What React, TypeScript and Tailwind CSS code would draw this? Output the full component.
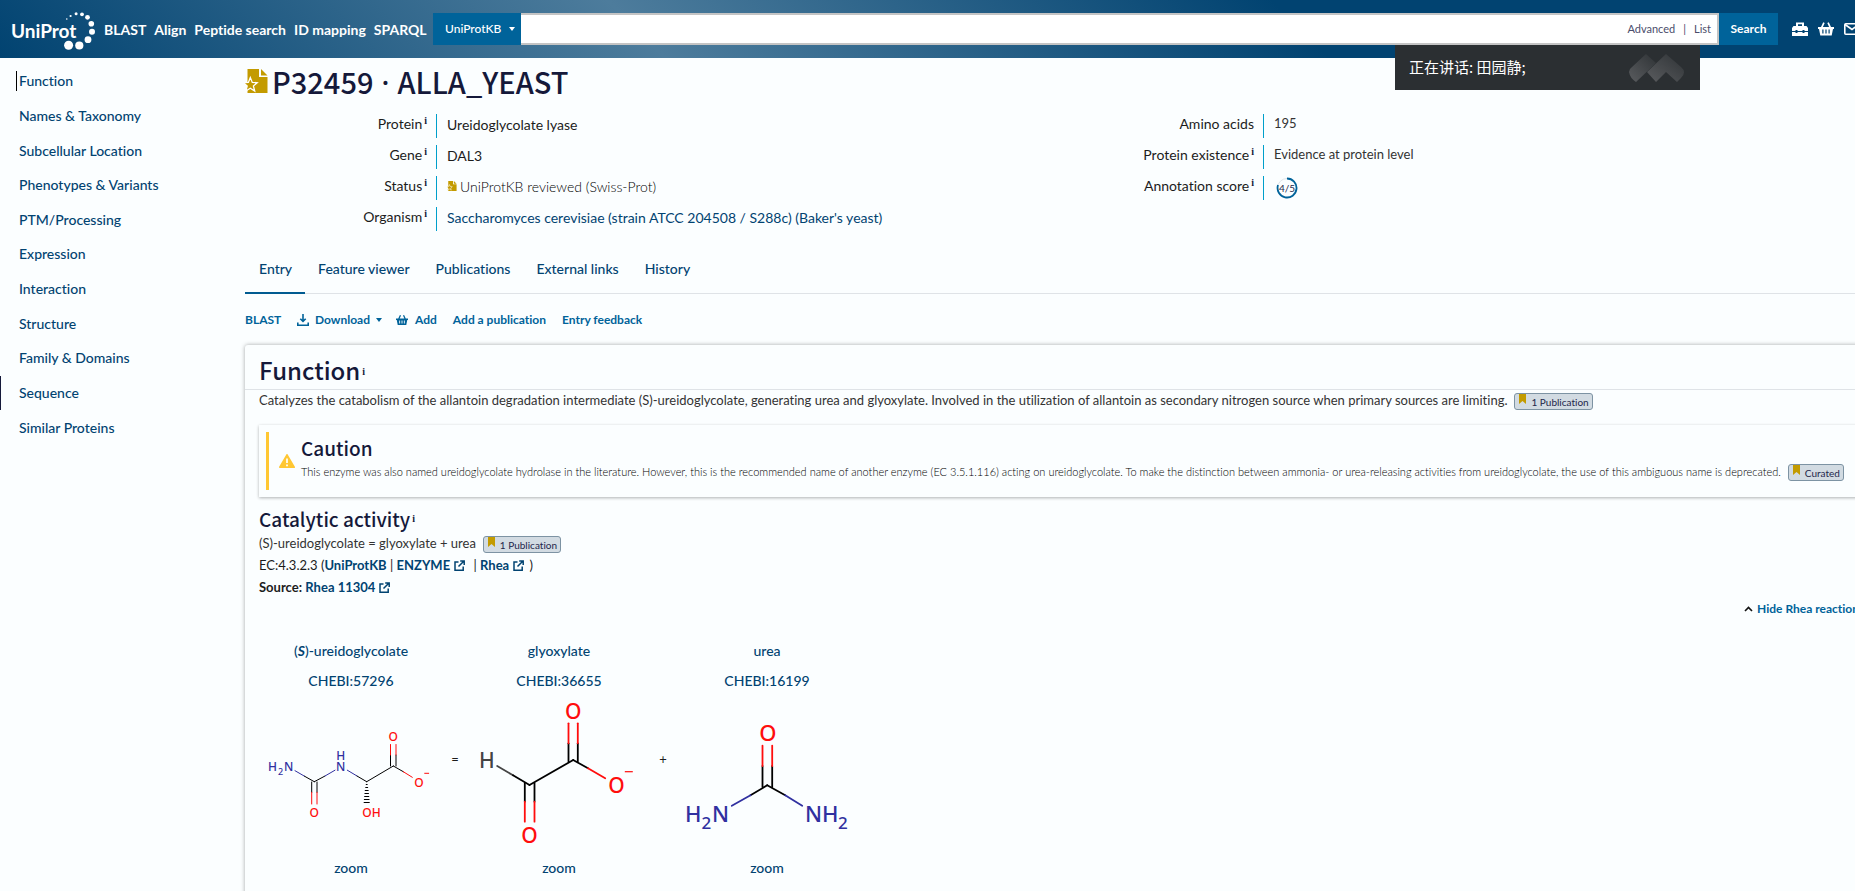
import type { ReactNode } from 'react';

const heading = "font-['Noto_Sans_CJK_SC',sans-serif] font-medium text-[#15193a]";

function Info() {
  return <sup className="relative -top-[5px] align-baseline font-['Liberation_Serif',serif] ml-[2px] text-[10px] leading-none font-bold text-[#15193a]">i</sup>;
}

function Logo() {
  const dots = [
    [66.8, 14, 0.8], [70.6, 11, 1.1], [76.1, 8.7, 1.5], [82, 9.3, 1.9], [87.5, 12.3, 2.4],
    [91.3, 18.7, 2.8], [92, 26.7, 3], [88, 34.7, 3.4], [79.3, 40.5, 4.1], [68.6, 40.3, 4.5],
  ];
  return (
    <svg width="96" height="48" viewBox="0 0 96 48" fill="#fff" role="img" aria-label="UniProt">
      <text x="11" y="33" fontFamily="Lato" fontWeight="700" fontSize="19">UniProt</text>
      {dots.map(([x, y, r]) => <circle key={x} cx={x} cy={y} r={r} />)}
    </svg>
  );
}

function Toolbox() {
  return (
    <svg width="16" height="14" viewBox="0 0 16 14" fill="#fff" aria-hidden="true">
      <path d="M4 4V0.500h8V4h2.500L16 6v3h-3.500V8h-2v1h-5V8h-2v1H0V6l1.500-2H4zM6 4h4V2.200H6zM0 10h3.500v1h2v-1h5v1h2v-1H16v4H0z" />
    </svg>
  );
}

function Basket({ size = 16 }: { size?: number }) {
  return (
    <svg width={size} height={size} viewBox="0 0 16 16" fill="currentColor" aria-hidden="true">
      <path fillRule="evenodd" d="M5.200 1.200 6.700 1.900 4.900 6h6.200L9.300 1.900l1.500-.7L13 6h3v2h-1l-1.300 6.500H2.300L1 8H0V6h3zM4.300 8.500v4h1.200v-4zM7.400 8.500v4h1.200v-4zM10.500 8.500v4h1.200v-4z" />
    </svg>
  );
}

function Mail() {
  return (
    <svg width="16" height="12" viewBox="0 0 16 12" fill="none" stroke="#fff" strokeWidth="1.600" aria-hidden="true">
      <rect x="0.800" y="0.800" width="14.400" height="10.400" rx="1" />
      <path d="m1 1.500 7 5 7-5" />
    </svg>
  );
}

function Reviewed({ width, height }: { width: number; height: number }) {
  return (
    <svg width={width} height={height} viewBox="0 0 22 24" aria-hidden="true">
      <path d="M2 0h11.500v8H22v16H2z" fill="#c39b00" />
      <path d="M15.500 0 22 6.500h-6.500z" fill="#c39b00" />
      <path d="m4.800 8.500 2 4.900 4.900.3-3.800 3.300 1.300 5-4.400-2.700L.4 22l1.300-5L-2 13.700l4.900-.3z" fill="#c39b00" stroke="#fff" strokeWidth="1.300" />
    </svg>
  );
}

function External() {
  return (
    <svg className="ml-[4px] inline-block align-[-1px]" width="11" height="11" viewBox="0 0 11 11" fill="none" stroke="#014371" strokeWidth="1.500" aria-hidden="true">
      <path d="M4.500 2H1v8.200h8.200V6.500M6.200.9H10.200V5M10 1 4.500 6.500" />
    </svg>
  );
}

function Badge({ children }: { children: ReactNode }) {
  return (
    <button className="ml-[7px] inline-flex h-[17px] items-start rounded-[3px] border border-[#7d93a3] bg-[#d2dbe2] pr-[3px] pl-[4px] text-[10px] leading-[17px] font-normal text-[#23264a]">
      <svg className="mr-[5px]" width="7" height="10" viewBox="0 0 7 10" fill="#c39b00" aria-hidden="true"><path d="M0 0h7v10L3.500 7 0 10z" /></svg>
      {children}
    </button>
  );
}

function Caret() {
  return <svg width="6" height="4" viewBox="0 0 6 4" fill="currentColor" aria-hidden="true"><path d="M0 0h6L3 4z" /></svg>;
}

function Row({ label, info = true, children }: { label: string; info?: boolean; children: ReactNode }) {
  return (
    <div className="flex h-6">
      <dt className="w-[191px] shrink-0 pr-[9px] text-right leading-[19px]">{label}{info && <Info />}</dt>
      <dd className="flex items-center border-l border-[#009fcb] pb-[4px] pl-[10px] whitespace-nowrap">{children}</dd>
    </div>
  );
}

const sections = ['Function', 'Names & Taxonomy', 'Subcellular Location', 'Phenotypes & Variants', 'PTM/Processing', 'Expression', 'Interaction', 'Structure', 'Family & Domains', 'Sequence', 'Similar Proteins'];

const RED = '#ff0d0d';
const BLUE = '#3030a0';
const INK = '#000';

type Bond = [number, number, number, number, string];

function Molecule({ bonds, width, children }: { bonds: Bond[]; width: number; children: ReactNode }) {
  return (
    <svg width="180" height="157" viewBox="0 1 180 157" fontFamily="Noto Sans" aria-hidden="true">
      {bonds.map(([x1, y1, x2, y2, c], i) => <line key={i} x1={x1} y1={y1} x2={x2} y2={y2} stroke={c} strokeWidth={width} strokeLinecap="round" />)}
      {children}
    </svg>
  );
}

const ureidoglycolate = (
  <Molecule width={1} bonds={[
    [34, 75.7, 43.5, 81.2, BLUE], [43.5, 81.2, 53.3, 86.7, INK], [53.3, 86.7, 64, 81, INK], [64, 81, 74, 75.2, BLUE],
    [50.7, 87, 50.7, 97.3, INK], [50.7, 97.3, 50.7, 109, RED], [56, 87, 56, 97.3, INK], [56, 97.3, 56, 109, RED],
    [86.3, 75.2, 96, 81, BLUE], [96, 81, 105.700, 86.7, INK], [105.700, 86.7, 132.300, 71, INK],
    [129.500, 71, 129.500, 60, INK], [129.500, 60, 129.500, 49.500, RED], [135, 71, 135, 60, INK], [135, 60, 135, 49.500, RED],
    [132.300, 71, 142.300, 76.7, INK], [142.300, 76.7, 151.300, 82.300, RED],
    [163.700, 78.300, 167.700, 78.300, RED],
    [105.200, 89.500, 106.200, 89.500, INK], [104.700, 92.500, 106.700, 92.500, INK], [104.200, 95.500, 107.200, 95.500, INK],
    [103.900, 98.500, 107.500, 98.500, INK], [103.600, 101.500, 107.800, 101.500, INK], [103.300, 104.500, 108.100, 104.500, INK], [103.100, 107.500, 108.300, 107.500, INK],
  ]}>
    <g fontSize="12" fill={BLUE}>
      <text x="7" y="76">H</text><text x="17" y="80" fontSize="9">2</text><text x="23" y="76">N</text>
      <text x="79.700" y="65" textAnchor="middle">H</text><text x="79.700" y="76" textAnchor="middle">N</text>
    </g>
    <g fontSize="12" fill={RED} textAnchor="middle">
      <text x="53.300" y="122">O</text><text x="110.500" y="122">OH</text><text x="132.300" y="46">O</text><text x="158" y="92">O</text>
    </g>
  </Molecule>
);

const glyoxylate = (
  <Molecule width={1.8} bonds={[
    [28.2, 71, 44, 80.300, '#444'], [44, 80.300, 60.500, 90, INK], [60.500, 90, 104.200, 65, INK],
    [55.8, 88, 55.8, 106.700, INK], [55.8, 106.700, 55.8, 126.700, RED], [65.500, 88, 65.500, 106.700, INK], [65.500, 106.700, 65.500, 126.700, RED],
    [99.500, 66.500, 99.500, 48.300, INK], [99.500, 48.300, 99.500, 28.300, RED], [108.800, 66.500, 108.800, 48.300, INK], [108.800, 48.300, 108.800, 28.300, RED],
    [104.200, 65, 119, 73.300, INK], [119, 73.300, 136.200, 83.300, RED],
  ]}>
    <path d="M155.800 76.700h8" stroke={RED} strokeWidth="1.200" />
    <text x="10" y="73" fontSize="21" fill="#444">H</text>
    <g fontSize="21" fill={RED} textAnchor="middle">
      <text x="60.500" y="148">O</text><text x="104.200" y="23.500">O</text><text x="147.500" y="98">O</text>
    </g>
  </Molecule>
);

const urea = (
  <Molecule width={1.8} bonds={[
    [85.500, 92, 85.500, 71, INK], [85.500, 71, 85.500, 50.700, RED], [95.200, 92, 95.200, 71, INK], [95.200, 71, 95.200, 50.700, RED],
    [90.200, 90.300, 73.500, 100.300, INK], [73.500, 100.300, 54.800, 110.700, BLUE],
    [90.200, 90.300, 108.200, 100.300, INK], [108.200, 100.300, 125.200, 110.700, BLUE],
  ]}>
    <text x="90.800" y="46" fontSize="22" fill={RED} textAnchor="middle">O</text>
    <g fontSize="22" fill={BLUE}>
      <text x="8" y="127">H</text><text x="24.500" y="134" fontSize="17">2</text><text x="35" y="127">N</text>
      <text x="128" y="127">N</text><text x="145" y="127">H</text><text x="161" y="134" fontSize="17">2</text>
    </g>
  </Molecule>
);

function Participant({ name, id, children }: { name: ReactNode; id: string; children: ReactNode }) {
  return (
    <div className="flex w-[180px] flex-col items-center text-[14px] font-medium text-[#014371]">
      <a href="#chebi" className="leading-[30px]">{name}</a>
      <a href="#chebi" className="leading-[30px]">{id}</a>
      {children}
      <a href="#zoom" className="leading-[30px]">zoom</a>
    </div>
  );
}

export default function App() {
  return (
    <div className="h-screen overflow-hidden bg-[#fbfeff] font-['Lato',sans-serif] text-[14px] text-[#1c1c1c] [font-variant-ligatures:none]">
      <div className="w-[calc(100%+44px)]">
        <header className="flex h-[58px] items-center bg-[linear-gradient(45deg,#014371_0%,#4d7c9c_34%,#014371_68%)] pr-[39px] text-white">
          <a href="#home" className="mr-[8px] shrink-0"><Logo /></a>
          <nav className="flex w-[329px] shrink-0 gap-[8px] font-bold whitespace-nowrap">
            <a href="#blast">BLAST</a><a href="#align">Align</a><a href="#peptide">Peptide search</a><a href="#idmapping">ID mapping</a><a href="#sparql">SPARQL</a>
          </nav>
          <form className="flex h-8 flex-1" onSubmit={(e) => e.preventDefault()}>
            <label className="flex w-[88px] items-center bg-[#00639a]">
              <select aria-label="Database" className="h-full w-[76px] appearance-none bg-transparent pl-[12px] text-[12px] font-medium outline-none"><option>UniProtKB</option></select>
              <Caret />
            </label>
            <div className="flex flex-1 items-center border-2 border-l-0 border-[#c4c4c4] bg-white pr-[6px] text-[11px] text-[#4b4d6b]">
              <input aria-label="Search UniProtKB" className="h-full min-w-0 flex-1 bg-transparent px-2 outline-none" />
              <a href="#advanced">Advanced</a><span className="px-[8px]">|</span><a href="#list">List</a>
            </div>
            <button className="w-[59px] bg-[#00639a] text-[12px] font-bold">Search</button>
          </form>
          <div className="ml-[14px] flex items-center gap-[10px]">
            <button aria-label="Tools"><Toolbox /></button>
            <button aria-label="Basket"><Basket /></button>
            <button aria-label="Contact"><Mail /></button>
          </div>
        </header>

        <div className="flex">
          <aside className="w-[245px] shrink-0 pt-[6px]">
            <nav className="grid min-h-[381px] auto-rows-fr font-medium text-[#014371]">
              {sections.map((s) => (
                <div key={s} className={s === 'Sequence' ? 'flex items-center border-l border-[#15193a] pl-[15px]' : 'flex items-center pl-[16px]'}>
                  <a href="#section" className={s === 'Function' ? 'border-l border-black pl-[2px] leading-5' : 'pl-[3px] leading-5'}>{s}</a>
                </div>
              ))}
            </nav>
          </aside>

          <main className="min-w-0 flex-1">
            <div className="flex h-[56px] items-center gap-[4px] pb-[10px]">
              <Reviewed width={23} height={24} />
              <h1 className={`${heading} flex items-center text-[29px] leading-none`}>
                P32459<span className="w-[24px] text-center font-['Noto_Sans',sans-serif]">·</span>ALLA_YEAST
              </h1>
            </div>

            <div className="grid grid-cols-2">
              <dl className="flex flex-col gap-[7px]">
                <Row label="Protein">Ureidoglycolate lyase</Row>
                <Row label="Gene">DAL3</Row>
                <Row label="Status"><Reviewed width={10} height={10} /><span className="ml-[3px] font-light text-black">UniProtKB reviewed (Swiss-Prot)</span></Row>
                <Row label="Organism"><a href="#organism" className="text-[#014371]">Saccharomyces cerevisiae (strain ATCC 204508 / S288c) (Baker's yeast)</a></Row>
              </dl>
              <dl className="flex flex-col gap-[7px]">
                <Row label="Amino acids" info={false}><span className="text-[13px] text-[#333]">195</span></Row>
                <Row label="Protein existence"><span className="text-[13px] text-[#333]">Evidence at protein level</span></Row>
                <Row label="Annotation score">
                  <svg className="mt-[4px] ml-[2px]" width="22" height="22" viewBox="0 0 22 22" fill="none" aria-label="4 out of 5">
                    <circle cx="11" cy="11" r="9.500" stroke="#dfe5ea" strokeWidth="1" />
                    <path d="M11 1.500A9.500 9.500 0 1 1 2 8.100" stroke="#00639a" strokeWidth="1.800" />
                    <text x="11" y="14.500" fontSize="10" fontFamily="Lato" fill="#23264a" textAnchor="middle">4/5</text>
                  </svg>
                </Row>
              </dl>
            </div>

            <div className="mt-[13px] flex h-[50px] border-b border-[#dfe3e7] font-medium text-[#014371]">
              {['Entry', 'Feature viewer', 'Publications', 'External links', 'History'].map((t) => (
                <button key={t} className={t === 'Entry' ? 'h-[50px] border-b-2 border-[#015b91] pr-[13px] pl-[14px]' : 'px-[13px]'}>{t}</button>
              ))}
            </div>

            <div className="flex h-[51px] items-center text-[12px] font-bold text-[#00639a]">
              <button className="w-[37px] text-left">BLAST</button>
              <button className="ml-[15px] flex items-center">
                <svg className="mr-[6px]" width="12" height="12" viewBox="0 0 12 12" fill="none" stroke="currentColor" strokeWidth="1.600" aria-hidden="true"><path d="M6 0v7M3.300 4.700 6 7.400l2.700-2.700M.8 8.500v2.700h10.400V8.500" /></svg>
                Download<span className="ml-[6px]"><Caret /></span>
              </button>
              <button className="ml-[14px] flex items-center gap-[7px]"><Basket size={12} />Add</button>
              <button className="ml-[16px]">Add a publication</button>
              <button className="ml-[16px]">Entry feedback</button>
            </div>

            <section className="min-h-[600px] rounded-tl-[3px] shadow-[0_0_4px_rgba(0,0,0,0.35)]">
              <h2 className={`${heading} h-[45px] border-b border-[#dfe3e7] pl-[14px] text-[24px] leading-[50px]`}>Function<Info /></h2>
              <div className="pl-[14px] text-[13px]">
                <div className="flex h-[22px] items-center whitespace-nowrap text-[#333]">
                  <p>Catalyzes the catabolism of the allantoin degradation intermediate (S)-ureidoglycolate, generating urea and glyoxylate. Involved in the utilization of allantoin as secondary nitrogen source when primary sources are limiting.</p>
                  <Badge>1 Publication</Badge>
                </div>
                <div className="mt-[13px] flex h-[72px] items-center py-[7px] pl-[7px] shadow-[0_1px_3px_rgba(0,0,0,0.3)]">
                  <div className="flex h-full items-center border-l-[3px] border-[#ffc733] pl-[10px]">
                    <svg width="16" height="14" viewBox="0 0 16 14" aria-hidden="true">
                      <path d="M8 .8 15.200 13.200H.8z" fill="#ffc733" stroke="#ffc733" strokeWidth="1.600" strokeLinejoin="round" />
                      <path d="M8 4.500v4.500M8 10.500v1.700" stroke="#fff" strokeWidth="1.700" />
                    </svg>
                    <div className="ml-[6px] pb-[4px]">
                      <h4 className={`${heading} text-[19px] leading-[26px]`}>Caution</h4>
                      <div className="flex h-[22px] items-center text-[11px] font-light whitespace-nowrap text-black">
                        <p>This enzyme was also named ureidoglycolate hydrolase in the literature. However, this is the recommended name of another enzyme (EC 3.5.1.116) acting on ureidoglycolate. To make the distinction between ammonia- or urea-releasing activities from ureidoglycolate, the use of this ambiguous name is deprecated.</p>
                        <Badge>Curated</Badge>
                      </div>
                    </div>
                  </div>
                </div>
                <h3 className={`${heading} mt-[8px] text-[19px] leading-[28px]`}>Catalytic activity<Info /></h3>
                <div className="flex h-[22px] items-center text-[#333]"><p>(S)-ureidoglycolate = glyoxylate + urea</p><Badge>1 Publication</Badge></div>
                <p className="leading-[21px]">
                  EC:4.3.2.3 (<a href="#ec" className="font-bold text-[#014371]">UniProtKB</a> | <a href="#enzyme" className="font-bold text-[#014371]">ENZYME<External /></a> <span className="pl-[5px]">|</span> <a href="#rhea" className="font-bold text-[#014371]">Rhea<External /></a> <span className="pl-[2px]">)</span>
                </p>
                <p className="leading-[22px]"><strong>Source:</strong> <a href="#rhea" className="font-bold text-[#014371]">Rhea 11304<External /></a></p>
                <button className="ml-auto flex h-[22px] items-center gap-[4px] pr-[40px] text-[12px] font-bold text-[#00639a]">
                  <svg width="9" height="6" viewBox="0 0 9 6" fill="none" stroke="#111" strokeWidth="1.600" aria-hidden="true"><path d="M1 5 4.500 1.500 8 5" /></svg>
                  Hide Rhea reaction
                </button>
                <div className="mt-[16px] flex items-center pl-[2px]">
                  <Participant name={<>(<b><i>S</i></b>)-ureidoglycolate</>} id="CHEBI:57296">{ureidoglycolate}</Participant>
                  <span className="w-[28px] text-center">=</span>
                  <Participant name="glyoxylate" id="CHEBI:36655">{glyoxylate}</Participant>
                  <span className="w-[28px] text-center">+</span>
                  <Participant name="urea" id="CHEBI:16199">{urea}</Participant>
                </div>
              </div>
            </section>
          </main>
        </div>
      </div>

      <div className="absolute top-[45px] right-[155px] flex h-[45px] w-[305px] items-center justify-between bg-[#2b2f32] pr-[15px] pl-[14px] font-['Noto_Sans_CJK_SC',sans-serif] text-[15px] text-white">
        <span>正在讲话: 田园静;</span>
        <svg width="57" height="30" viewBox="0 0 57 30" aria-hidden="true">
          <defs>
            <linearGradient id="fade" x1="0" y1="1" x2="1" y2="0"><stop offset="0" stopColor="#5a5c5f" /><stop offset="1" stopColor="#2f3336" /></linearGradient>
          </defs>
          <path d="M18 1 28 10 8 29Q2 25 1 19Q1 16 4 14z" fill="url(#fade)" />
          <path d="M38 1 53 14Q59 19 53 25L49 29 38 19 28 29 19 19z" fill="url(#fade)" />
        </svg>
      </div>
    </div>
  );
}
